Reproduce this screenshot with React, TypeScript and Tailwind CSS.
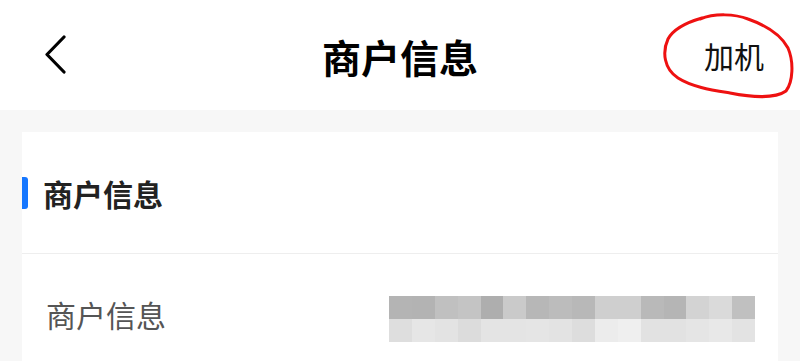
const topRow = ["#b4b4b4", "#b3b3b3", "#c0c0c0", "#c4c4c4", "#aeaeae", "#cacaca", "#b7b7b7", "#bcbcbc", "#b8b8b8", "#cfcfcf", "#cfcfcf", "#b9b9b9", "#b5b5b5", "#d3d3d3", "#dadada", "#c0c0c0"];
const bottomRow = ["#dedede", "#e6e6e6", "#e3e3e3", "#dcdcdc", "#e4e4e4", "#e4e4e4", "#e5e5e5", "#e3e3e3", "#dddddd", "#ececec", "#efefef", "#e2e2e2", "#e2e2e2", "#e5e5e5", "#e8e8e8", "#e3e3e3"];

// 打码的商户名称
function Mosaic() {
  return (
    <div className="mt-[10px] flex w-[366px] flex-col">
      {[topRow, bottomRow].map((row, i) => (
        <div key={i} className="flex h-[23px]">
          {row.map((color, j) => (
            <div key={j} className="h-full flex-1" style={{ backgroundColor: color }} />
          ))}
        </div>
      ))}
    </div>
  );
}

export default function App() {
  return (
    <div
      className="flex h-[361px] w-[800px] flex-col overflow-hidden bg-[#f7f7f7]"
      style={{ fontFamily: '"Noto Sans CJK SC", "Noto Sans", sans-serif' }}
    >
      <header className="relative flex h-[110px] shrink-0 items-center bg-white">
        <button type="button" className="ml-[42px] flex h-[40px] w-[28px] items-center justify-center text-black">
          <svg width="28" height="40" viewBox="0 0 28 40" fill="none">
            <path d="M22 2 L5 19.5 L22 37" stroke="currentColor" strokeWidth="3.2" strokeLinecap="round" strokeLinejoin="round" />
          </svg>
        </button>
        <h1 className="absolute left-1/2 top-[56px] -translate-x-1/2 -translate-y-1/2 text-[39px] font-bold leading-none text-black">
          商户信息
        </h1>
        <span className="ml-auto mr-[36px] text-[30px] leading-none text-[#111]">加机</span>
        {/* 手绘红圈 */}
        <svg className="pointer-events-none absolute left-0 top-0" width="800" height="110" viewBox="0 0 800 110" fill="none">
          <path
            d="M700 19 C715 13 735 14 748 19 C765 25 780 33 788 48 C794 62 793 82 786 91 C775 99 750 97 730 93 C712 90 692 87 678 78 C664 69 662 52 668 39 C674 28 688 22 702 18"
            stroke="#ee1111"
            strokeWidth="3"
            strokeLinecap="round"
          />
        </svg>
      </header>

      <main className="px-[22px] pt-[22px]">
        <section className="bg-white">
          <div className="flex h-[122px] items-center border-b border-[#eeeeee]">
            <span className="h-[32px] w-[6px] rounded-r-[3px] bg-[#1677ff]" />
            <h2 className="ml-[15px] text-[30px] font-bold leading-none text-[#222]">商户信息</h2>
          </div>
          <div className="flex h-[120px] items-center justify-between pl-[24px] pr-[23px]">
            <span className="text-[30px] leading-none text-[#555]">商户信息</span>
            <Mosaic />
          </div>
        </section>
      </main>
    </div>
  );
}
